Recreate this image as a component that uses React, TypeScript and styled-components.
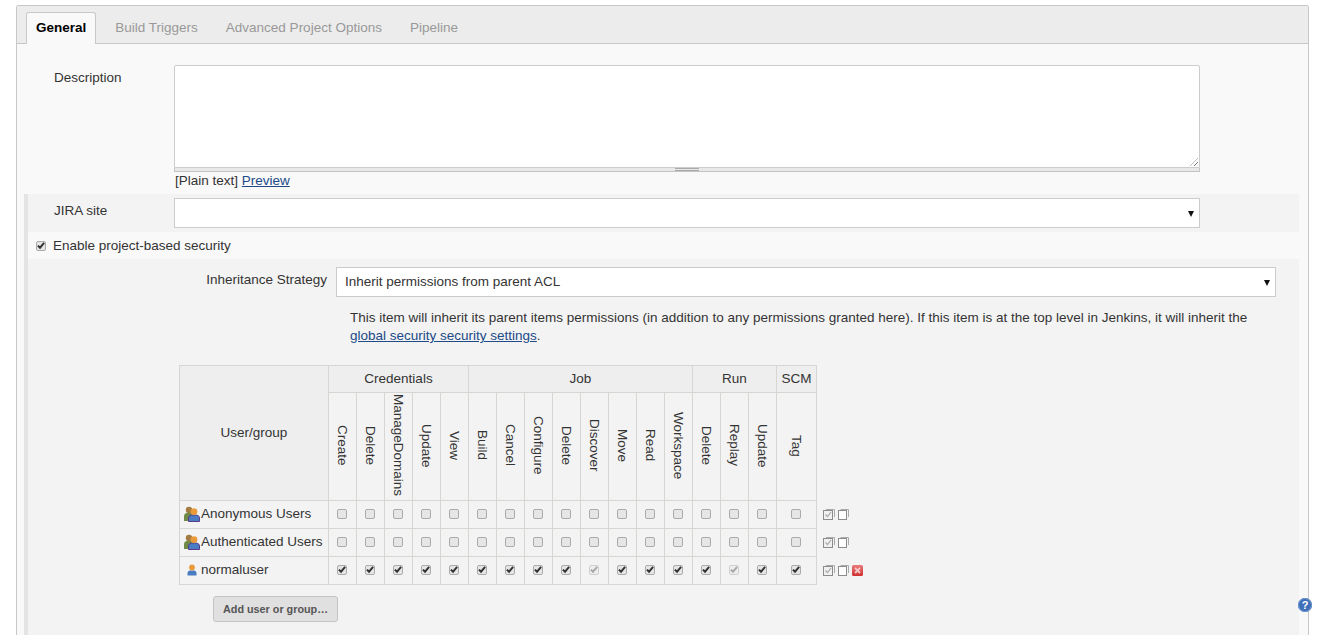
import React from 'react';
import styled, { createGlobalStyle } from 'styled-components';

const GlobalStyle = createGlobalStyle`
    html, body {
        margin: 0;
        padding: 0;
        height: 635px;
        overflow: hidden;
        background: #fff;
        font-family: "Liberation Sans", Arial, sans-serif;
        font-size: 13.5px;
        color: #333;
    }
    * { box-sizing: border-box; }
`;

const groups = [
    { name: 'Credentials', perms: ['Create', 'Delete', 'ManageDomains', 'Update', 'View'] },
    { name: 'Job', perms: ['Build', 'Cancel', 'Configure', 'Delete', 'Discover', 'Move', 'Read', 'Workspace'] },
    { name: 'Run', perms: ['Delete', 'Replay', 'Update'] },
    { name: 'SCM', perms: ['Tag'] },
];

const allPerms = groups.flatMap(g => g.perms.map(p => g.name + p));
const faded = ['JobDiscover', 'RunReplay'];

const users = [
    { name: 'Anonymous Users', group: true, checked: false, removable: false },
    { name: 'Authenticated Users', group: true, checked: false, removable: false },
    { name: 'normaluser', group: false, checked: true, removable: true },
];

function Check({ checked, faded }: { checked: boolean; faded?: boolean }) {
    return (
        <CheckBox $faded={faded}>
            {checked && (
                <svg width="9" height="9" viewBox="0 0 9 9">
                    <path d="M1 4.6 L3.4 7 L8 1.6" fill="none" stroke={faded ? '#a8a8a8' : '#333'} strokeWidth="2.2" />
                </svg>
            )}
        </CheckBox>
    );
}

function UserIcon({ group }: { group: boolean }) {
    if (group) {
        return (
            <UserSvg width="16" height="16" viewBox="0 0 16 16">
                <path d="M0 15 V10 Q0 7.5 2.5 7 H7 Q9.5 7.5 9.5 10 V15 Z" fill="#6f8a45" />
                <circle cx="5" cy="4" r="3.2" fill="#a27c42" />
                <path d="M4.5 15.5 V12 Q4.5 9.6 7.5 9 H12.5 Q15.5 9.6 15.5 12 V15.5 Z" fill="#4a7cc4" stroke="#5b3a8c" strokeWidth="1" />
                <circle cx="10" cy="5.6" r="3.4" fill="#ea9a3a" />
            </UserSvg>
        );
    }
    return (
        <UserSvg width="16" height="16" viewBox="0 0 16 16">
            <path d="M3.5 13.5 V11 Q3.5 8.8 6 8.4 H10 Q12.5 8.8 12.5 11 V13.5 Z" fill="#4a7cc4" />
            <circle cx="8" cy="5.4" r="2.9" fill="#ea9a3a" />
        </UserSvg>
    );
}

function CheckAllIcon() {
    return (
        <svg width="12" height="11" viewBox="0 0 12 11">
            <path d="M3 0.5 H11.5 V8" fill="none" stroke="#aaa" />
            <rect x="0.5" y="1.5" width="9" height="9" fill="#f0f0f0" stroke="#8c8c8c" />
            <path d="M2.5 5.5 L4.5 7.5 L8 3" fill="none" stroke="#aaa" strokeWidth="1.2" />
        </svg>
    );
}

function ClearAllIcon() {
    return (
        <svg width="11" height="11" viewBox="0 0 11 11">
            <path d="M2.5 0.5 H10.5 V8" fill="none" stroke="#aaa" />
            <rect x="0.5" y="1.5" width="8" height="9" fill="#fff" stroke="#8c8c8c" />
        </svg>
    );
}

function RemoveIcon() {
    return (
        <svg width="11" height="11" viewBox="0 0 11 11">
            <defs>
                <linearGradient id="removeFill" x1="0" y1="0" x2="0" y2="1">
                    <stop offset="0" stopColor="#ea7a7a" />
                    <stop offset="1" stopColor="#cf2f2f" />
                </linearGradient>
            </defs>
            <rect width="11" height="11" rx="1.5" fill="url(#removeFill)" />
            <path d="M3 3 L8 8 M8 3 L3 8" stroke="#f4c8c8" strokeWidth="1.8" />
        </svg>
    );
}

export default function App(): JSX.Element {
    return (
        <Page>
            <GlobalStyle />
            <Panel>
                <TabBar>
                    <Tab $active>General</Tab>
                    <Tab>Build Triggers</Tab>
                    <Tab>Advanced Project Options</Tab>
                    <Tab>Pipeline</Tab>
                </TabBar>

                <DescriptionRow>
                    <FieldLabel>Description</FieldLabel>
                    <div>
                        <TextArea />
                        <Grip><GripMark /></Grip>
                        <PreviewLine>[Plain text] <PlainLink href="#">Preview</PlainLink></PreviewLine>
                    </div>
                </DescriptionRow>

                <BarSection>
                    <JiraRow>
                        <FieldLabel>JIRA site</FieldLabel>
                        <SelectBox $width={1026}><Arrow /></SelectBox>
                    </JiraRow>
                    <EnableRow>
                        <Check checked />
                        <span>Enable project-based security</span>
                    </EnableRow>
                    <Nested>
                        <StrategyRow>
                            <FieldLabel>Inheritance Strategy</FieldLabel>
                            <SelectBox $width={940}>
                                Inherit permissions from parent ACL
                                <Arrow />
                            </SelectBox>
                        </StrategyRow>
                        <HelpText>
                            This item will inherit its parent items permissions (in addition to any permissions granted here). If this item is at the top level in Jenkins, it will inherit the <PlainLink href="#">global security security settings</PlainLink>.
                        </HelpText>

                        <MatrixRow>
                            <Matrix>
                                <thead>
                                    <tr>
                                        <UserHead rowSpan={2}>User/group</UserHead>
                                        {groups.map(g => (
                                            <GroupHead key={g.name} colSpan={g.perms.length}>{g.name}</GroupHead>
                                        ))}
                                    </tr>
                                    <tr>
                                        {allPerms.map((p, i) => (
                                            <PermHead key={p} $wide={i === allPerms.length - 1}>
                                                <Rotated>{p.replace(/^(Credentials|Job|Run|SCM)/, '')}</Rotated>
                                            </PermHead>
                                        ))}
                                    </tr>
                                </thead>
                                <tbody>
                                    {users.map(u => (
                                        <tr key={u.name}>
                                            <UserCell>
                                                <UserName>
                                                    <UserIcon group={u.group} />
                                                    {u.name}
                                                </UserName>
                                            </UserCell>
                                            {allPerms.map(p => (
                                                <PermCell key={p}>
                                                    <Check checked={u.checked} faded={u.checked && faded.includes(p)} />
                                                </PermCell>
                                            ))}
                                            <ActionCell>
                                                <Actions>
                                                    <CheckAllIcon />
                                                    <ClearAllIcon />
                                                    {u.removable && <RemoveIcon />}
                                                </Actions>
                                            </ActionCell>
                                        </tr>
                                    ))}
                                </tbody>
                            </Matrix>
                        </MatrixRow>

                        <AddButton>Add user or group…</AddButton>
                    </Nested>
                </BarSection>
                <HelpBadge>?</HelpBadge>
            </Panel>
        </Page>
    );
}

const Page = styled.div`
    padding: 5px 22px 0 16px;
    height: 635px;
    overflow: hidden;
`;

const Panel = styled.div`
    position: relative;
    height: 640px;
    background: #f9f9f9;
    border: 1px solid #c8c8c8;
    border-radius: 2px 2px 0 0;
`;

const TabBar = styled.div`
    display: flex;
    align-items: flex-end;
    height: 38px;
    padding-left: 9px;
    background: #ececec;
    border-bottom: 1px solid #c8c8c8;
`;

const Tab = styled.div<{ $active?: boolean }>`
    height: ${p => (p.$active ? '32px' : '31px')};
    padding: ${p => (p.$active ? '6px 9px 0' : '7px 14px 0')};
    margin-right: ${p => (p.$active ? '5px' : '0')};
    margin-bottom: ${p => (p.$active ? '-1px' : '0')};
    line-height: 17px;
    font-weight: ${p => (p.$active ? 700 : 400)};
    color: ${p => (p.$active ? '#000' : '#999')};
    background: ${p => (p.$active ? '#f9f9f9' : 'transparent')};
    border: ${p => (p.$active ? '1px solid #c8c8c8' : '0')};
    border-bottom: 0;
    border-radius: 3px 3px 0 0;
`;

const DescriptionRow = styled.div`
    display: grid;
    grid-template-columns: 120px 1026px;
    padding: 21px 0 0 37px;
    height: 150px;
`;

const FieldLabel = styled.div`
    padding-top: 5px;
    line-height: 16px;
`;

const TextArea = styled.div`
    position: relative;
    height: 103px;
    background: #fff;
    border: 1px solid #ccc;
    border-radius: 2px 2px 0 0;

    &::after {
        content: "";
        position: absolute;
        right: 1px;
        bottom: 1px;
        width: 8px;
        height: 8px;
        background: repeating-linear-gradient(135deg, transparent 0 2px, #777 2px 3px);
        clip-path: polygon(100% 0, 100% 100%, 0 100%);
    }
`;

const Grip = styled.div`
    display: flex;
    justify-content: center;
    align-items: flex-end;
    height: 4px;
    background: #e8e8e8;
    border: 1px solid #c4c4c4;
    border-top: 0;
`;

const GripMark = styled.div`
    width: 24px;
    height: 3px;
    border-top: 1px solid #aaa;
    border-bottom: 1px solid #aaa;
`;

const PreviewLine = styled.div`
    padding-left: 1px;
    line-height: 17px;
`;

const PlainLink = styled.a`
    color: #204a87;
    text-decoration: underline;
`;

const BarSection = styled.div`
    margin: 0 9px 0 7px;
    border-left: 4px solid #e4e4e4;
`;

const JiraRow = styled.div`
    display: grid;
    grid-template-columns: 120px 1026px;
    align-items: start;
    height: 38px;
    padding: 4px 0 0 26px;
    background: #f3f3f3;
`;

const SelectBox = styled.div<{ $width: number }>`
    position: relative;
    width: ${p => p.$width}px;
    height: 30px;
    padding-left: 8px;
    line-height: 28px;
    background: #fff;
    border: 1px solid #ccc;
`;

const Arrow = styled.span`
    position: absolute;
    right: 5px;
    top: 12px;
    width: 0;
    height: 0;
    border-left: 3.5px solid transparent;
    border-right: 3.5px solid transparent;
    border-top: 6px solid #111;
`;

const EnableRow = styled.div`
    display: flex;
    align-items: center;
    gap: 7px;
    height: 27px;
    padding-left: 8px;
`;

const CheckBox = styled.span<{ $faded?: boolean }>`
    display: inline-flex;
    justify-content: center;
    align-items: center;
    width: 10px;
    height: 10px;
    flex: none;
    background: ${p => (p.$faded ? '#eeeeee' : '#e6e6e6')};
    border: 1px solid ${p => (p.$faded ? '#d0d0d0' : '#ababab')};
    border-radius: 2px;
`;

const Nested = styled.div`
    height: 400px;
    padding: 8px 0 0 151px;
    background: #f3f3f3;
`;

const StrategyRow = styled.div`
    display: flex;
    align-items: flex-start;
    justify-content: flex-end;
    gap: 9px;
    width: 1248px;
    margin-left: -151px;
`;

const HelpText = styled.div`
    width: 920px;
    margin: 12px 0 0 171px;
    line-height: 18px;
`;

const MatrixRow = styled.div`
    margin-top: 20px;
`;

const Matrix = styled.table`
    border-collapse: collapse;
    table-layout: fixed;
    font-size: 13.5px;

    th, td {
        border: 1px solid #d6d6d2;
        padding: 0;
        font-weight: 400;
    }
`;

const UserHead = styled.th`
    width: 149px;
    background: #eeeeee;

    && {
        padding-bottom: 2px;
    }
`;

const GroupHead = styled.th`
    height: 27px;
    background: #eeeeee;

    && {
        padding-bottom: 2px;
    }
`;

const PermHead = styled.th<{ $wide?: boolean }>`
    width: ${p => (p.$wide ? '40px' : '28px')};
    height: 108px;
    background: #f3f3f3;

    && {
        padding: 0 1px 2px 0;
    }
`;

const Rotated = styled.span`
    writing-mode: vertical-rl;
    display: inline-block;
    line-height: 16px;
    vertical-align: middle;
`;

const UserCell = styled.td`
    height: 28px;
    white-space: nowrap;
`;

const UserName = styled.div`
    display: flex;
    align-items: center;
    gap: 1px;
    padding-left: 4px;
    margin-top: -2px;
`;

const UserSvg = styled.svg`
    flex: none;
`;

const PermCell = styled.td`
    text-align: center;
    line-height: 0;

    & > span {
        margin: 0 1px 2px 0;
    }
`;

const ActionCell = styled.td`
    && { border: 0; }
`;

const Actions = styled.div`
    display: flex;
    gap: 3px;
    padding-left: 6px;
`;

const AddButton = styled.button`
    display: block;
    width: 125px;
    height: 26px;
    margin: 11px 0 0 34px;
    padding: 0;
    font-family: inherit;
    font-size: 10.8px;
    font-weight: 700;
    color: #555;
    background: #e0e0e0;
    border: 1px solid #c4c4c4;
    border-radius: 3px;
`;

const HelpBadge = styled.div`
    position: absolute;
    left: 1281px;
    top: 592px;
    width: 14px;
    height: 14px;
    font-size: 11px;
    font-weight: 700;
    line-height: 14px;
    text-align: center;
    color: #fff;
    background: #3f6fb8;
    border-radius: 50%;
    box-shadow: inset 0 0 0 1px #6d93c9;
`;
